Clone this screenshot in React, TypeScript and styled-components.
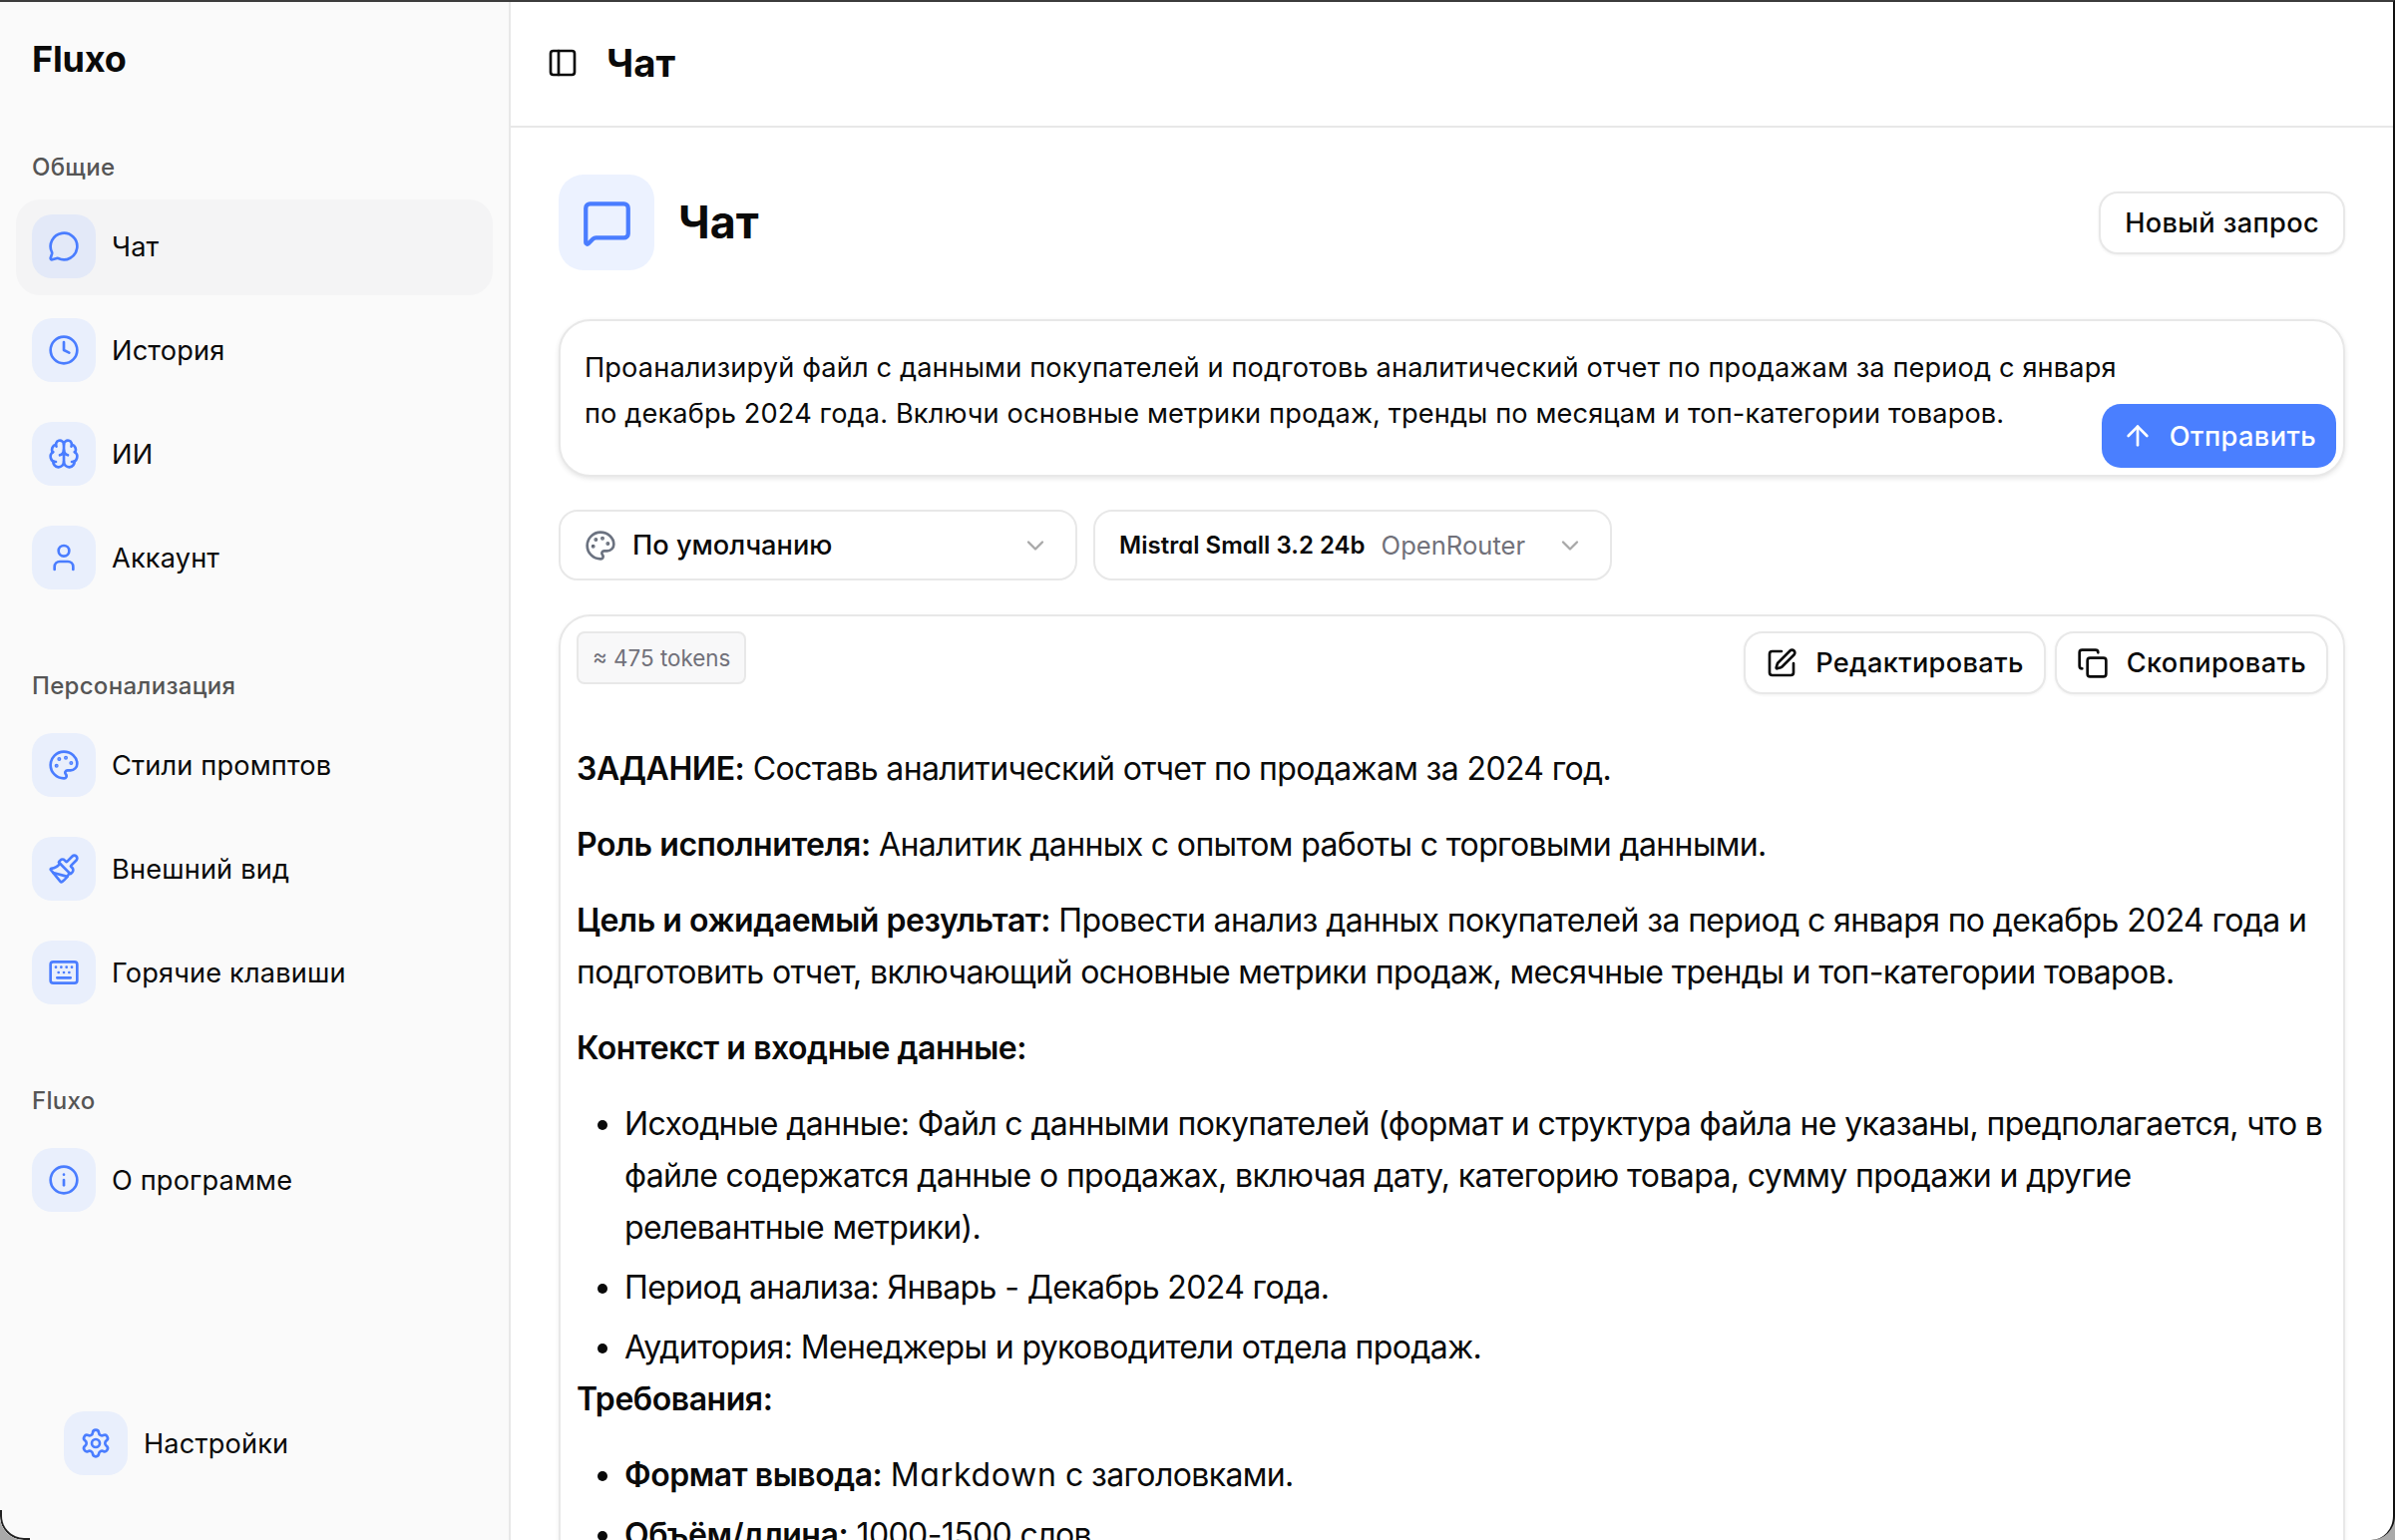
import React from 'react';
import styled, { createGlobalStyle } from 'styled-components';
import { MessageCircle, Clock, Brain, User, Palette, Paintbrush, Keyboard, Info, Settings, PanelLeft, MessageSquare, ArrowUp, ChevronDown, SquarePen, Copy } from 'lucide-react';

const Global = createGlobalStyle`
  html, body { margin: 0; padding: 0; background: #a9a9a9; }
  * { box-sizing: border-box; }
  body { font-family: Inter, "Noto Sans", sans-serif; color: #0a0a0a; }
`;
const Frame = styled.div`
  position: relative; width: 2401px; height: 1544px; display: flex; overflow: hidden; background: #fff;
  border-top: 2px solid #3c3c3c; border-right: 2px solid #111;
  border-radius: 0 0 24px 24px;
  &::before { content: ''; position: absolute; left: 0; bottom: 0; width: 28px; height: 28px; border-left: 2px solid #222; border-bottom: 2px solid #222; border-bottom-left-radius: 24px; z-index: 3; pointer-events: none; }
`;
const Sidebar = styled.aside`
  flex: 0 0 512px; height: 100%; background: #fafafa; border-right: 2px solid #e8e8e8;
  padding: 0 16px 48px; display: flex; flex-direction: column;
`;
const Logo = styled.div`
  font-size: 36px; font-weight: 700; height: 57px; line-height: 57px; margin: 29px 0 62px 16px; letter-spacing: -0.2px;
`;
const GroupLabel = styled.div`
  font-size: 24px; font-weight: 500; color: #555; line-height: 36px; margin: 0 0 14px 16px; letter-spacing: 0.3px;
`;
const Group = styled.nav`
  display: flex; flex-direction: column; gap: 8px; margin-bottom: 62px;
`;
const Row = styled.div<{ $active?: boolean }>`
  height: 96px; padding: 0 16px 2px; display: flex; align-items: center; gap: 16px; border-radius: 24px;
  background: ${p => (p.$active ? '#f4f4f5' : 'transparent')};
  font-size: 27.2px; font-weight: 400; letter-spacing: 0.15px;
`;
const IconBox = styled.span<{ $active?: boolean }>`
  width: 64px; height: 64px; border-radius: 20px; display: flex; align-items: center; justify-content: center;
  background: ${p => (p.$active ? '#e3e9f8' : '#e9effc')}; color: #4a7dff; flex: none;
`;
const SidebarFooter = styled.div`
  margin-top: auto; padding-left: 32px;
`;
const Main = styled.main`
  flex: 1; min-width: 0; height: 100%; display: flex; flex-direction: column; overflow: hidden;
`;
const TopBar = styled.header`
  flex: none; height: 126px; border-bottom: 2px solid #e8e8e8; display: flex; align-items: center; gap: 28px; padding: 0 0 3px 36px;
`;
const TopTitle = styled.div`
  font-size: 38.4px; font-weight: 700;
`;
const Content = styled.div`
  padding: 47px 48px 0 48px; display: flex; flex-direction: column;
`;
const PageHead = styled.div`
  display: flex; align-items: center; gap: 24px; height: 96px; margin-bottom: 49px;
`;
const PageIcon = styled.span`
  width: 96px; height: 96px; border-radius: 25px; background: #ecf2ff; color: #4a7dff; display: flex; align-items: center; justify-content: center; flex: none;
`;
const H1 = styled.h1`
  font-size: 44.8px; font-weight: 700; margin: 0; flex: 1;
`;
const Button = styled.button<{ $tight?: boolean }>`
  height: 63px; padding: 0 ${p => (p.$tight ? 20 : 24)}px; background: #fff; border: 2px solid #e8e8e8; border-radius: 19px;
  font: 500 27.2px Inter, sans-serif; letter-spacing: 0.35px; color: #0a0a0a; display: inline-flex; align-items: center; gap: 18px;
  box-shadow: 0 1px 3px rgba(0,0,0,.06);
`;
const InputCard = styled.div`
  position: relative; height: 158px; background: #fff; border: 2px solid #e8e8e8; border-radius: 32px;
  box-shadow: 0 2px 5px rgba(0,0,0,.1); padding: 24px 24px; font-size: 27.2px; letter-spacing: 0.13px; line-height: 46px; margin-bottom: 33px;
`;
const SendButton = styled.button`
  position: absolute; right: 7px; bottom: 7px; height: 64px; width: 235px; border: 0; border-radius: 19px; background: #4a7fff; color: #fff;
  font: 500 27.2px Inter, sans-serif; letter-spacing: 0.4px; display: flex; align-items: center; justify-content: center; gap: 16px;
`;
const Selects = styled.div`
  display: flex; gap: 16px; margin-bottom: 34px;
`;
const Select = styled.div`
  width: 520px; height: 71px; border: 2px solid #e8e8e8; border-radius: 19px; background: #fff;
  display: flex; align-items: center; padding: 0 26px 0 24px; gap: 16px; font-size: 27.2px; font-weight: 500;
`;
const SelectName = styled.span`
  font-size: 24px; font-weight: 600; letter-spacing: 0.02px;
`;
const SelectHint = styled.span`
  font-size: 25.6px; font-weight: 400; color: #71717a;
`;
const Chevron = styled(ChevronDown)`
  margin-left: auto; color: #a8a8a8; flex: none;
`;
const ResultCard = styled.section`
  border: 2px solid #e8e8e8; border-radius: 32px; padding: 15px 15px 15px 16px; background: #fff; box-shadow: 0 2px 5px rgba(0,0,0,.06);
`;
const Toolbar = styled.div`
  display: flex; align-items: flex-start; gap: 9px; height: 63px; margin-bottom: 49px;
`;
const Chip = styled.span`
  height: 53px; padding: 0 14px; display: flex; align-items: center; border: 2px solid #e8e8e8; border-radius: 8px;
  background: #f8f8f9; color: #71717a; font-size: 22.4px; margin-right: auto;
`;
const Prose = styled.div`
  font-size: 32px; line-height: 52px; letter-spacing: -0.63px;
  p { margin: 0 0 24px; }
  ul { margin: 0; padding-left: 48px; letter-spacing: -0.62px; }
  li { margin-bottom: 8px; }
  li:last-child { margin-bottom: 0; }
  b { font-weight: 600; letter-spacing: -0.45px; }
`;
const Latin = styled.span`
  font-feature-settings: 'cv11';
`;
const ProseLatin = styled(Latin)`
  letter-spacing: 0.7px;
`;

const NavRow = ({ icon: I, label, active }: { icon: any; label: string; active?: boolean }) => (
  <Row $active={active}>
    <IconBox $active={active}><I size={32} strokeWidth={2} /></IconBox>
    {label}
  </Row>
);

export default function App() {
  return (
    <>
      <Global />
      <Frame>
        <Sidebar>
          <Logo>Fluxo</Logo>
          <GroupLabel>Общие</GroupLabel>
          <Group>
            <NavRow icon={MessageCircle} label="Чат" active />
            <NavRow icon={Clock} label="История" />
            <NavRow icon={Brain} label="ИИ" />
            <NavRow icon={User} label="Аккаунт" />
          </Group>
          <GroupLabel>Персонализация</GroupLabel>
          <Group>
            <NavRow icon={Palette} label="Стили промптов" />
            <NavRow icon={Paintbrush} label="Внешний вид" />
            <NavRow icon={Keyboard} label="Горячие клавиши" />
          </Group>
          <GroupLabel>Fluxo</GroupLabel>
          <Group>
            <NavRow icon={Info} label="О программе" />
          </Group>
          <SidebarFooter>
            <NavRow icon={Settings} label="Настройки" />
          </SidebarFooter>
        </Sidebar>
        <Main>
          <TopBar>
            <PanelLeft size={32} strokeWidth={2} />
            <TopTitle>Чат</TopTitle>
          </TopBar>
          <Content>
            <PageHead>
              <PageIcon><MessageSquare size={51} strokeWidth={2} /></PageIcon>
              <H1>Чат</H1>
              <Button>Новый запрос</Button>
            </PageHead>
            <InputCard>
              Проанализируй файл с данными покупателей и подготовь аналитический отчет по продажам за период с января<br />
              по декабрь 2024 года. Включи основные метрики продаж, тренды по месяцам и топ-категории товаров.
              <SendButton><ArrowUp size={32} strokeWidth={2} />Отправить</SendButton>
            </InputCard>
            <Selects>
              <Select>
                <Palette size={32} strokeWidth={2} color="#6b7280" />
                По умолчанию
                <Chevron size={28} strokeWidth={2} />
              </Select>
              <Select>
                <SelectName><Latin>Mistral Small 3.2 24b</Latin></SelectName>
                <SelectHint>OpenRouter</SelectHint>
                <Chevron size={28} strokeWidth={2} />
              </Select>
            </Selects>
            <ResultCard>
              <Toolbar>
                <Chip>≈ 475 tokens</Chip>
                <Button $tight><SquarePen size={32} strokeWidth={2} />Редактировать</Button>
                <Button $tight><Copy size={32} strokeWidth={2} />Скопировать</Button>
              </Toolbar>
              <Prose>
                <p><b>ЗАДАНИЕ:</b> Составь аналитический отчет по продажам за 2024 год.</p>
                <p><b>Роль исполнителя:</b> Аналитик данных с опытом работы с торговыми данными.</p>
                <p><b>Цель и ожидаемый результат:</b> Провести анализ данных покупателей за период с января по декабрь 2024 года и подготовить отчет, включающий основные метрики продаж, месячные тренды и топ-категории товаров.</p>
                <p><b>Контекст и входные данные:</b></p>
                <ul>
                  <li>Исходные данные: Файл с данными покупателей (формат и структура файла не указаны, предполагается, что в файле содержатся данные о продажах, включая дату, категорию товара, сумму продажи и другие релевантные метрики).</li>
                  <li>Период анализа: Январь - Декабрь 2024 года.</li>
                  <li>Аудитория: Менеджеры и руководители отдела продаж.</li>
                </ul>
                <p><b>Требования:</b></p>
                <ul>
                  <li><b>Формат вывода:</b> <ProseLatin>Markdown</ProseLatin> с заголовками.</li>
                  <li><b>Объём/длина:</b> 1000-1500 слов.</li>
                </ul>
              </Prose>
            </ResultCard>
          </Content>
        </Main>
      </Frame>
    </>
  );
}
